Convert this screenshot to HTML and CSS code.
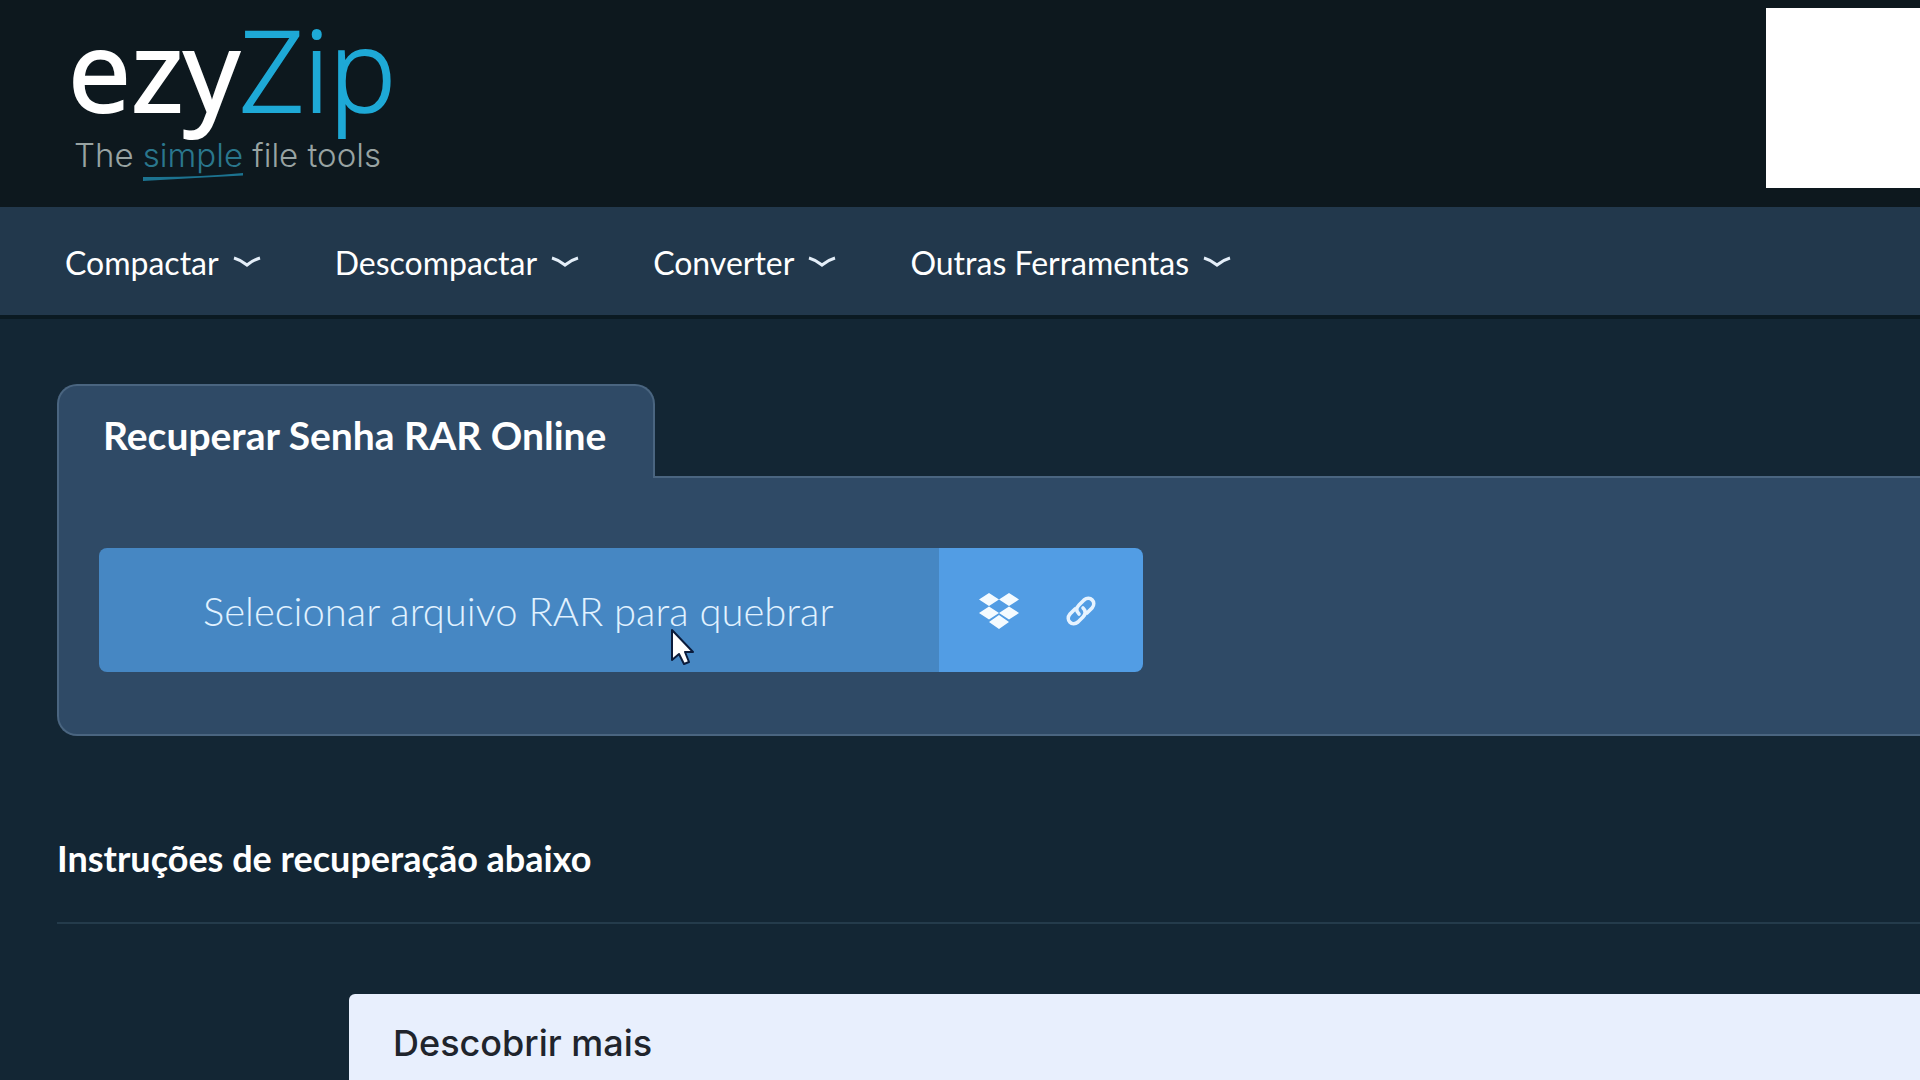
FILE: index.html
```html
<!DOCTYPE html>
<html lang="pt">
    <head>
        <meta charset="utf-8">
        <title>Recuperar Senha RAR Online - ezyZip</title>
        <link rel="stylesheet" href="styles.css">
    </head>

    <body>
        <header class="header">
            <a href="#" class="logo">
                <span class="name">ezy<span class="zip">Zip</span></span>
                <span class="slogan">The <span class="simple">simple<svg class="stroke" viewBox="0 0 98 10" preserveAspectRatio="none"><path d="M0 5 Q50 6 98 0 L98 3 Q50 6 0 10 Z" fill="#1c7390"/></svg></span> file tools</span>
            </a>
            <div class="banner"></div>
        </header>

        <nav class="nav">
            <a href="#">Compactar <svg class="arrow" viewBox="0 0 28 12"><path d="M1 2 Q8 4 14 9 Q20 4 27 2"/></svg></a>
            <a href="#">Descompactar <svg class="arrow" viewBox="0 0 28 12"><path d="M1 2 Q8 4 14 9 Q20 4 27 2"/></svg></a>
            <a href="#">Converter <svg class="arrow" viewBox="0 0 28 12"><path d="M1 2 Q8 4 14 9 Q20 4 27 2"/></svg></a>
            <a href="#">Outras Ferramentas <svg class="arrow" viewBox="0 0 28 12"><path d="M1 2 Q8 4 14 9 Q20 4 27 2"/></svg></a>
        </nav>

        <main class="content">
            <h1 class="tab">Recuperar Senha RAR Online</h1>
            <div class="panel">
                <div class="buttons">
                    <button class="select">Selecionar arquivo RAR para quebrar</button>
                    <div class="sources">
                        <button class="source" aria-label="Dropbox">
                            <svg width="40" height="36" viewBox="0 0 40 36" fill="#f4fbff"><path d="M10 0 L20 6.500 L10 13 L0 6.500 Z M30 0 L40 6.500 L30 13 L20 6.500 Z M10 13.500 L20 20 L10 26.500 L0 20 Z M30 13.500 L40 20 L30 26.500 L20 20 Z M20 22 L30 29 L20 36 L10 29 Z"/></svg>
                        </button>
                        <button class="source" aria-label="Link">
                            <svg width="32" height="32" viewBox="0 0 32 32" fill="none" stroke="#e6f3ff" stroke-width="3.600" stroke-linecap="round"><path d="M14 19 C10 15 12 12 14 10 L19 5 C25 0 32 7 27 13 L22 18"/><path d="M18 13 C22 17 20 20 18 22 L13 27 C7 32 0 25 5 19 L10 14"/></svg>
                        </button>
                    </div>
                    <svg class="cursor" viewBox="0 0 24 38"><path d="M2 2 V32 L9 26 L14 36 L19 34 L15 24 H23 Z" fill="#fff" stroke="#0b1c3c" stroke-width="2" stroke-linejoin="round"/></svg>
                </div>
            </div>

            <h2 class="subtitle">Instruções de recuperação abaixo</h2>
            <section class="discover">
                <h3>Descobrir mais</h3>
            </section>
        </main>
    </body>
</html>
```

FILE: styles.css
```css
* {box-sizing: border-box;}

body {
    display: flex;
    flex-direction: column;
    min-height: 100vh;
    margin: 0;
    background-color: #132634;
    color: white;
    font-family: Lato, sans-serif;
}

a {color: inherit; text-decoration: none;}
h1, h2, h3 {margin: 0;}
button {border: 0; padding: 0; font-family: inherit; color: inherit; cursor: pointer;}
svg {display: block;}

.header {
    display: flex;
    justify-content: space-between;
    height: 207px;
    padding: 8px 0 0 68px;
    background-color: #0d181e;
}

.logo {
    display: flex;
    flex-direction: column;
}
.name {
    font-family: "Open Sans", sans-serif;
    font-size: 112px;
    line-height: 122px;
    -webkit-text-stroke: 2px;
}
.zip {color: #1ea9d6; font-weight: 300;}
.slogan {
    padding-left: 6px;
    color: #98a3a2;
    font-family: Inter, sans-serif;
    font-size: 33px;
    font-weight: 300;
    line-height: 50px;
}
.simple {position: relative; color: #2a778d;}
.stroke {
    position: absolute;
    left: 0;
    bottom: -6px;
    width: 100%;
    height: 8px;
}

.banner {
    width: 154px;
    height: 180px;
    background-color: white;
}

.nav {
    display: flex;
    gap: 74px;
    height: 112px;
    padding: 2px 65px 0;
    background-color: #22384c;
    border-bottom: 4px solid #0b1a22;
}
.nav a {
    display: flex;
    align-items: center;
    gap: 14px;
    font-size: 32px;
}
.arrow {
    width: 28px;
    height: 12px;
    fill: none;
    stroke: #e4eef8;
    stroke-width: 3;
}

.content {
    display: flex;
    flex: 1;
    flex-direction: column;
    padding: 65px 0 0 57px;
}

.tab {
    align-self: flex-start;
    z-index: 1;
    height: 94px;
    margin-bottom: -2px;
    padding: 0 47px 0 44px;
    background-color: #2f4a66;
    border: 2px solid #4a6580;
    border-bottom: 0;
    border-radius: 20px 20px 0 0;
    font-size: 39px;
    line-height: 98px;
}

.panel {
    padding: 70px 40px 62px;
    background-color: #2f4a66;
    border: 2px solid #4a6580;
    border-right: 0;
    border-radius: 0 0 0 20px;
}

.buttons {
    position: relative;
    display: inline-flex;
    height: 124px;
    border-radius: 8px;
}
.select {
    padding: 2px 105px 0 104px;
    background-color: #4687c3;
    border-radius: 8px 0 0 8px;
    color: #e1f2ff;
    font-size: 40px;
    font-weight: 300;
}
.sources {
    display: flex;
    align-items: center;
    gap: 46px;
    padding: 2px 46px 0 40px;
    background-color: #529de4;
    border-radius: 0 8px 8px 0;
}
.source {background: none;}
.cursor {
    position: absolute;
    left: 571px;
    top: 80px;
    width: 24px;
    height: 38px;
}

.subtitle {
    margin-top: 96px;
    padding-bottom: 38px;
    border-bottom: 2px solid #243b4b;
    font-size: 36px;
    line-height: 52px;
}

.discover {
    flex: 1;
    margin: 70px 0 0 292px;
    padding: 26px 44px 0;
    background-color: #e8effd;
    border-radius: 6px 0 0 0;
    color: #20242c;
    font-family: Inter, sans-serif;
}
.discover h3 {
    font-size: 36px;
    font-weight: 500;
    line-height: 46px;
}
```
